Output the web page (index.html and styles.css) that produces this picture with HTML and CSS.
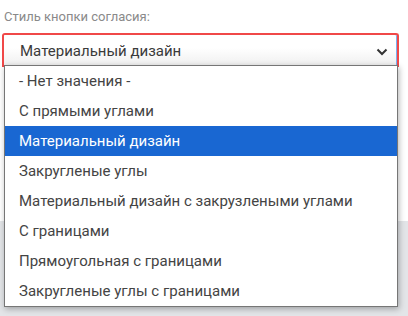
FILE: index.html
```html
<!DOCTYPE html>
<html lang="ru">
<head>
    <meta charset="UTF-8">
    <meta name="viewport" content="width=device-width, initial-scale=1.0">
    <title>Стиль кнопки согласия</title>
    <link rel="stylesheet" href="styles.css">
</head>
<body>
    <div class="panel">
        <label class="field-label">Стиль кнопки согласия:</label>

        <!-- Поле выбора с открытым списком -->
        <div class="select-wrap">
            <div class="select-box">
                <span class="select-value">Материальный дизайн</span>
                <svg class="chevron" width="12" height="8" viewBox="0 0 12 8">
                    <path d="M1.5 1.5 L6 6 L10.5 1.5" fill="none" stroke="#333" stroke-width="2"/>
                </svg>
            </div>

            <ul class="options">
                <li>- Нет значения -</li>
                <li>С прямыми углами</li>
                <li class="selected">Материальный дизайн</li>
                <li>Закругленые углы</li>
                <li>Материальный дизайн с закрузлеными углами</li>
                <li>С границами</li>
                <li>Прямоугольная с границами</li>
                <li>Закругленые углы с границами</li>
            </ul>
        </div>
    </div>
    <div class="footer"></div>
</body>
</html>
```

FILE: styles.css
```css
/* Общие стили */
body {
    margin: 0;
    font-family: Roboto, 'Liberation Sans', sans-serif;
    background: #ffffff;
}

.panel {
    height: 221px;
    padding: 8px 0 0 0;
    box-sizing: border-box;
    background: #ffffff;
}

.footer {
    height: 95px;
    background: #e3e5e8;
}

/* Подпись поля */
.field-label {
    display: block;
    margin-left: 4px;
    color: #8a8a8a;
    font-size: 13px;
    line-height: 18px;
}

/* Поле выбора */
.select-wrap {
    position: relative;
    margin: 7px 9px 0 2px;
}

.select-box {
    display: flex;
    align-items: center;
    justify-content: space-between;
    height: 32px;
    padding: 0 9px 0 16px;
    border: 2px solid #f04848;
    border-bottom: none;
    border-radius: 3px 3px 0 0;
    background: linear-gradient(#ffffff 40%, #eeeeee 100%);
    box-shadow: inset -1px 0 0 #7ab0f0;
    color: #3a3a3a;
    font-size: 15px;
}

.chevron {
    margin-top: 1px;
}

/* Выпадающий список */
.options {
    position: absolute;
    top: 32px;
    left: 2px;
    right: 1px;
    margin: 0;
    padding: 0;
    list-style: none;
    background: #ffffff;
    border: 1px solid #767676;
    box-shadow: 1px 2px 6px rgba(0,0,0,0.3);
}

.options li {
    height: 30px;
    line-height: 30px;
    padding-left: 14px;
    color: #444;
    font-size: 15px;
}

.options li.selected {
    background: #1967d2;
    color: #ffffff;
}
```
